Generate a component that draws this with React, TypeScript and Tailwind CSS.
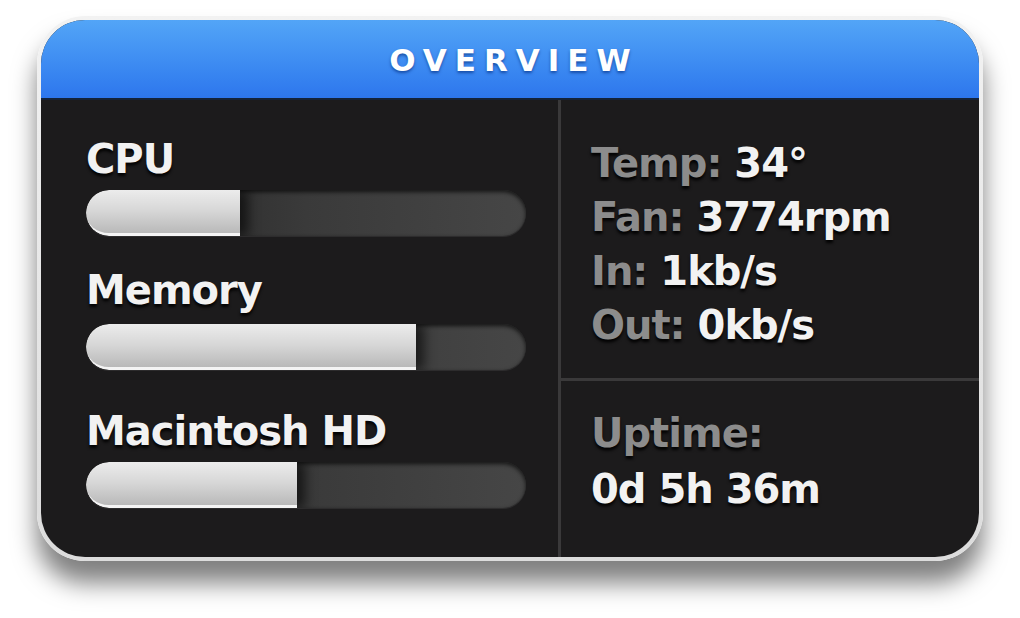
const font = { fontFamily: '"DejaVu Sans", "Liberation Sans", sans-serif' };

type Meter = { label: string; pct: number; mt: string; gap: string };

const meters: Meter[] = [
  { label: "CPU", pct: 35, mt: "mt-[36px]", gap: "mt-[8px]" },
  { label: "Memory", pct: 75, mt: "mt-[31px]", gap: "mt-[11px]" },
  { label: "Macintosh HD", pct: 48, mt: "mt-[38px]", gap: "mt-[8px]" },
];

const stats = [
  { k: "Temp:", v: "34°" },
  { k: "Fan:", v: "3774rpm" },
  { k: "In:", v: "1kb/s" },
  { k: "Out:", v: "0kb/s" },
];

function Bar({ pct }: { pct: number }) {
  return (
    <div className="relative h-[46px] w-[440px] rounded-full bg-gradient-to-r from-[#222222] via-[#3a3a3a] to-[#464646] shadow-[inset_0_2px_4px_rgba(0,0,0,0.7),0_1px_0_rgba(255,255,255,0.08)] overflow-hidden">
      <div
        className="h-full rounded-l-full bg-gradient-to-b from-[#ececec] via-[#d6d6d6] to-[#b9b9b9] border-b-[3px] border-[#f4f4f4] shadow-[8px_0_12px_rgba(0,0,0,0.6)]"
        style={{ width: `${pct}%` }}
      />
    </div>
  );
}

export default function App() {
  return (
    <div className="w-[1020px] h-[618px] bg-white overflow-hidden" style={font}>
      <div className="ml-[37px] mt-[16px] w-[946px] h-[545px] rounded-[48px] p-[4px] bg-gradient-to-b from-[#f2f2f2] to-[#dcdcdc] shadow-[0_22px_24px_rgba(0,0,0,0.5)]">
        <div className="w-full h-full rounded-[44px] overflow-hidden flex flex-col bg-[#1c1b1c]">
          <div className="h-[80px] shrink-0 flex items-center justify-center bg-gradient-to-b from-[#53a5f7] to-[#2d76ed] border-b-[2px] border-[#14233a]">
            <span className="mt-[3px] text-white font-bold text-[31px] tracking-[8px] pl-[8px] [text-shadow:0_2px_3px_rgba(0,40,120,0.6)]">
              OVERVIEW
            </span>
          </div>
          <div className="flex flex-1">
            <div className="w-[517px] shrink-0 pl-[45px] flex flex-col">
              {meters.map((m) => (
                <div key={m.label} className={`${m.mt} flex flex-col`}>
                  <div className="text-[#f2f2f2] font-bold text-[40px] leading-[46px] tracking-[-1px] [text-shadow:0_3px_3px_rgba(0,0,0,0.9)]">
                    {m.label}
                  </div>
                  <div className={m.gap}>
                    <Bar pct={m.pct} />
                  </div>
                </div>
              ))}
            </div>
            <div className="w-[3px] bg-[#3a393a] shrink-0" />
            <div className="flex-1 flex flex-col">
              <div className="h-[281px] pl-[30px] pt-[36px] border-b-[3px] border-[#3a393a]">
                {stats.map((s) => (
                  <div
                    key={s.k}
                    className="font-bold text-[40px] leading-[54px] tracking-[-1px] [text-shadow:0_3px_3px_rgba(0,0,0,0.9)]"
                  >
                    <span className="text-[#8c8c8c]">{s.k}</span>{" "}
                    <span className="text-[#f2f2f2]">{s.v}</span>
                  </div>
                ))}
              </div>
              <div className="pl-[30px] pt-[24px] font-bold text-[40px] leading-[56px] tracking-[-1px] [text-shadow:0_3px_3px_rgba(0,0,0,0.9)]">
                <div className="text-[#8c8c8c]">Uptime:</div>
                <div className="text-[#f2f2f2]">0d 5h 36m</div>
              </div>
            </div>
          </div>
        </div>
      </div>
    </div>
  );
}
